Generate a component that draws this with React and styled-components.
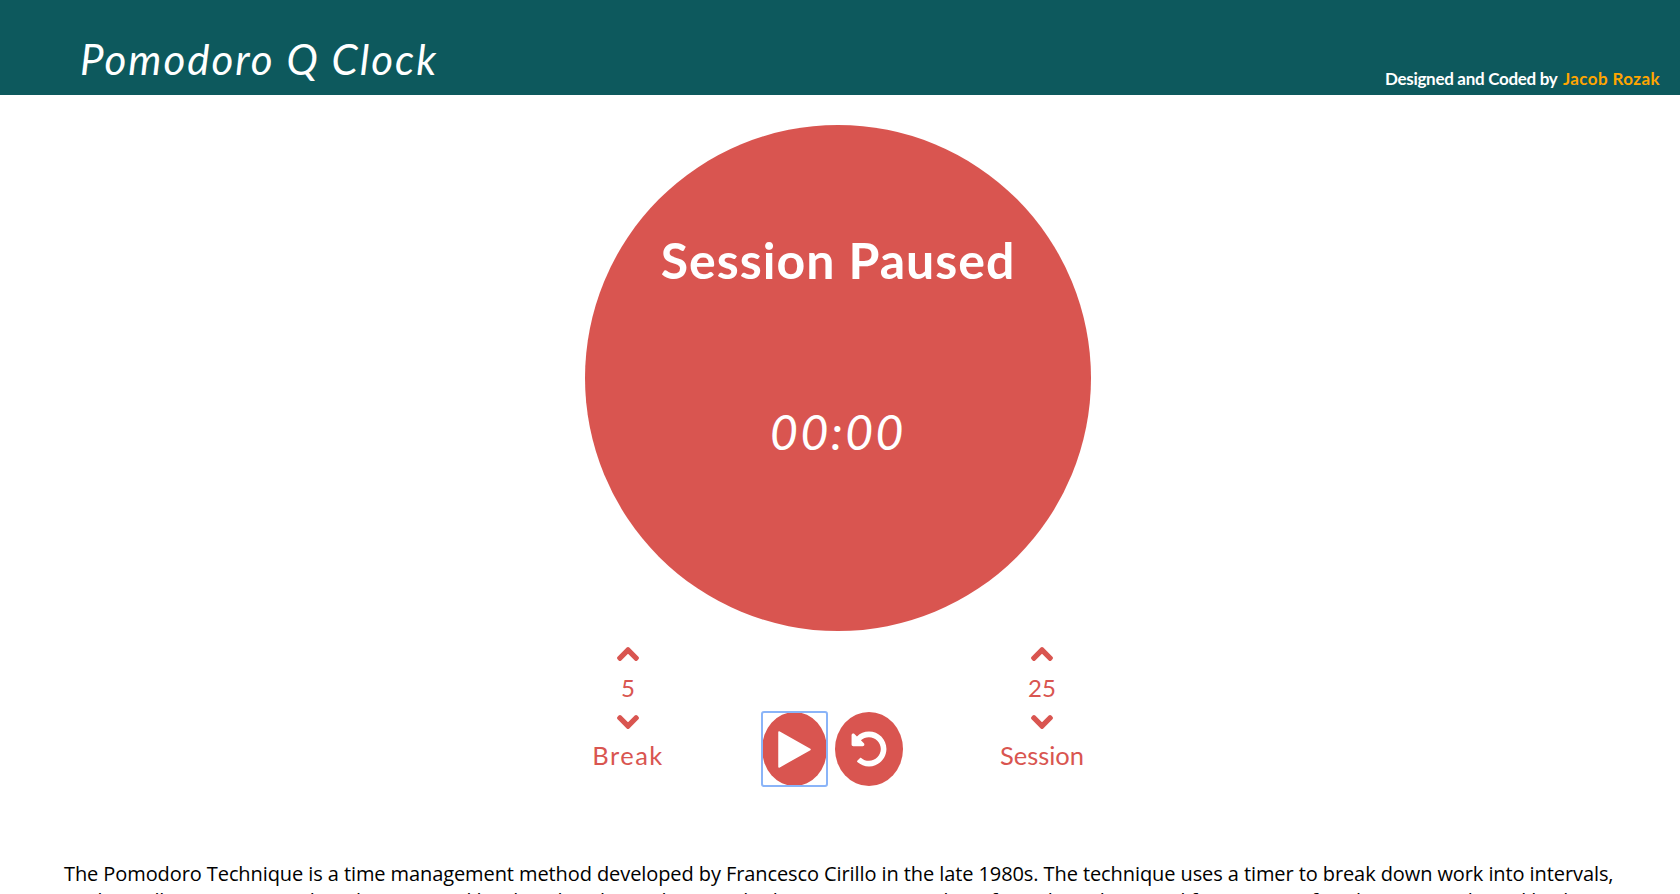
import React from "react";
import styled, { createGlobalStyle } from "styled-components";
import { FaChevronUp, FaChevronDown, FaUndoAlt } from "react-icons/fa";

const RED = "#d95550";
const HAND = `"Lato", "Open Sans", sans-serif`;

const GlobalStyle = createGlobalStyle`
  html, body {
    margin: 0;
    padding: 0;
    height: 894px;
    overflow: hidden;
    background: #fff;
  }
`;

const Header = styled.header`
  height: 95px;
  background: #0d595d;
  display: flex;
  justify-content: space-between;
  align-items: flex-end;
  padding: 0 20px 6px 80px;
  box-sizing: border-box;
  font-family: ${HAND};
`;

const Title = styled.h1`
  margin: 0 0 6px;
  color: #fff;
  font-size: 42px;
  font-weight: 400;
  font-style: italic;
  letter-spacing: 2px;
  line-height: 48px;
`;

const Credit = styled.div`
  color: #fff;
  font-size: 17px;
  font-weight: 700;
  line-height: 20px;
  letter-spacing: -0.3px;
`;

const CreditLink = styled.a`
  color: #ffa500;
  text-decoration: none;
  letter-spacing: 0.4px;
  margin-left: 2px;
`;

const Main = styled.main`
  display: flex;
  flex-direction: column;
  align-items: center;
  padding: 30px 4px 0 0;
  font-family: ${HAND};
`;

const Dial = styled.div`
  width: 506px;
  height: 506px;
  border-radius: 50%;
  background: ${RED};
  color: #fff;
  display: flex;
  flex-direction: column;
  align-items: center;
  padding-top: 102px;
  box-sizing: border-box;
`;

const Status = styled.h2`
  margin: 0;
  font-size: 50px;
  font-weight: 700;
  line-height: 66px;
  letter-spacing: 1px;
`;

const Time = styled.div`
  margin-top: 104px;
  font-size: 48px;
  font-style: italic;
  line-height: 70px;
  letter-spacing: 2.5px;
`;

const Controls = styled.div`
  width: 514px;
  margin-top: 11px;
  display: flex;
  justify-content: space-between;
  align-items: flex-start;
  color: ${RED};
`;

const Setter = styled.div`
  width: ${(p) => p.$width}px;
  display: flex;
  flex-direction: column;
  align-items: center;
`;

const Arrow = styled.button`
  border: 0;
  padding: 0;
  background: none;
  color: ${RED};
  display: flex;
  font-size: 24px;

  svg {
    stroke: currentColor;
    stroke-width: 30px;
  }
`;

const Amount = styled.div`
  font-size: 24px;
  line-height: 44px;
  height: 44px;
`;

const SetterLabel = styled.div`
  font-size: 25.5px;
  line-height: 34px;
  margin-top: 4px;
  letter-spacing: ${(p) => p.$spacing}px;
`;

const Buttons = styled.div`
  display: flex;
  gap: 8px;
  margin-top: 70px;
`;

const RoundButton = styled.button`
  width: ${(p) => p.$width}px;
  height: 74px;
  border: 0;
  padding: 0;
  border-radius: 50%;
  background: ${RED};
  color: #fff;
  display: flex;
  align-items: center;
  justify-content: center;
  font-size: ${(p) => p.$icon}px;
`;

const FocusRing = styled.div`
  display: flex;
  outline: 2px solid #8ab4f8;
  outline-offset: -1px;
  border-radius: 2px;
`;

const About = styled.p`
  margin: 0;
  padding: 74px 56px 0 64px;
  font-family: "Open Sans", sans-serif;
  font-size: 20px;
  letter-spacing: -0.09px;
  line-height: 27px;
  color: #000;
  text-align: left;
`;

const PlayIcon = () => (
  <svg width="33" height="37" viewBox="0 0 33 37">
    <path d="M1 1 L32 18.5 L1 36 Z" fill="#fff" stroke="#fff" strokeWidth="1.5" strokeLinejoin="round" />
  </svg>
);

export default function App() {
  return (
    <>
      <GlobalStyle />
      <Header>
        <Title>Pomodoro Q Clock</Title>
        <Credit>
          Designed and Coded by <CreditLink href="#">Jacob Rozak</CreditLink>
        </Credit>
      </Header>
      <Main>
        <Dial>
          <Status>Session Paused</Status>
          <Time>00:00</Time>
        </Dial>
        <Controls>
          <Setter $width={94}>
            <Arrow aria-label="increase break"><FaChevronUp /></Arrow>
            <Amount>5</Amount>
            <Arrow aria-label="decrease break"><FaChevronDown /></Arrow>
            <SetterLabel $spacing={1.5}>Break</SetterLabel>
          </Setter>
          <Buttons>
            <FocusRing>
              <RoundButton $width={65} aria-label="play"><PlayIcon /></RoundButton>
            </FocusRing>
            <RoundButton $width={68} $icon={36} aria-label="reset"><FaUndoAlt /></RoundButton>
          </Buttons>
          <Setter $width={106}>
            <Arrow aria-label="increase session"><FaChevronUp /></Arrow>
            <Amount>25</Amount>
            <Arrow aria-label="decrease session"><FaChevronDown /></Arrow>
            <SetterLabel $spacing={0}>Session</SetterLabel>
          </Setter>
        </Controls>
      </Main>
      <About>
        The Pomodoro Technique is a time management method developed by Francesco Cirillo in the late 1980s. The technique uses a timer to break down work into intervals, traditionally 25 minutes in length, separated by short breaks. Each interval is known as a pomodoro, from the Italian word for tomato, after the tomato-shaped kitchen timer Cirillo used as a student.
      </About>
    </>
  );
}
